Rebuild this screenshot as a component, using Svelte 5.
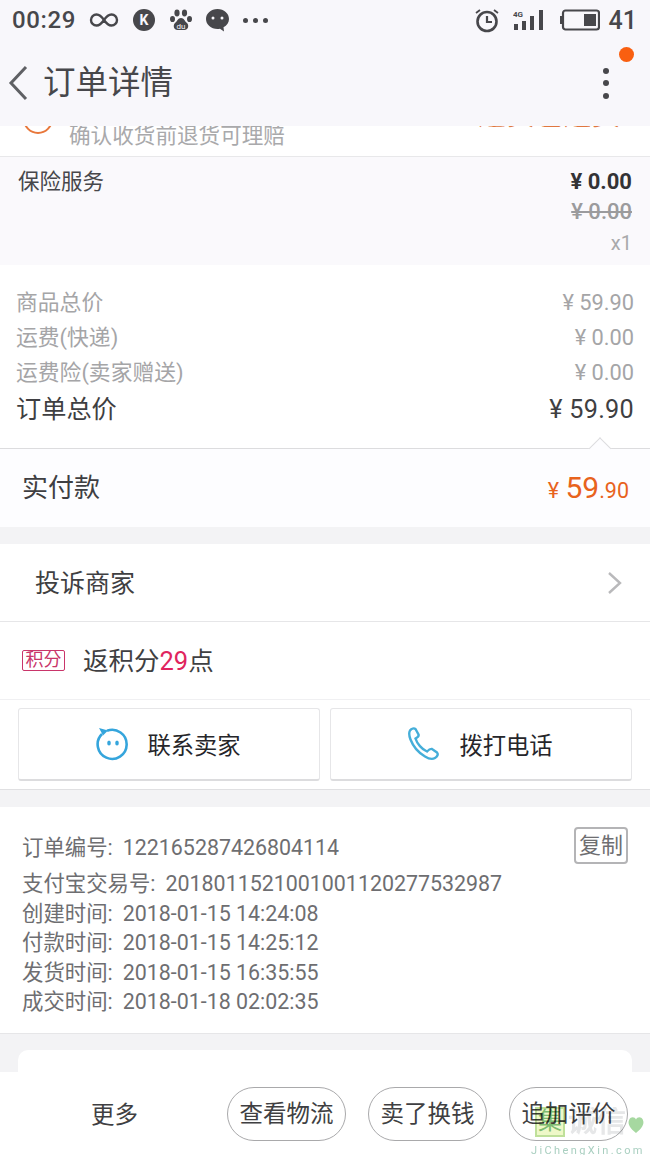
<script>
  const times = [
    ['创建时间:', '2018-01-15 14:24:08'],
    ['付款时间:', '2018-01-15 14:25:12'],
    ['发货时间:', '2018-01-15 16:35:55'],
    ['成交时间:', '2018-01-18 02:02:35']
  ];
  const fees = [
    ['商品总价', '¥ 59.90'],
    ['运费(快递)', '¥ 0.00'],
    ['运费险(卖家赠送)', '¥ 0.00']
  ];
</script>

<div class="page">
  <header class="top">
    <div class="status">
      <span class="clock">00:29</span>
      <svg class="ic" width="30" height="16" viewBox="0 0 30 16"><path d="M15 8C12 3.500 10 2.500 7.500 2.500a5.500 5.500 0 0 0 0 11C10 13.500 12 12.500 15 8c3-4.500 5-5.500 7.500-5.500a5.500 5.500 0 0 1 0 11C20 13.500 18 12.500 15 8z" fill="none" stroke="#47474b" stroke-width="2.400"/></svg>
      <span class="round">K</span>
      <svg class="ic" width="24" height="24" viewBox="0 0 24 24"><g fill="#47474b"><ellipse cx="8" cy="5" rx="2.600" ry="3.400"/><ellipse cx="15.500" cy="5" rx="2.600" ry="3.400"/><ellipse cx="3.500" cy="11" rx="2.500" ry="3.100"/><ellipse cx="20.500" cy="11" rx="2.500" ry="3.100"/><path d="M12 10c3 0 3.500 3 6 5 2.500 2.500 1 7-2.500 7h-7C5 22 3.500 17.500 6 15c2.500-2 3-5 6-5z"/></g><text x="12" y="20.500" font-size="8" text-anchor="middle" fill="#f8f7fb" font-family="Roboto">du</text></svg>
      <svg class="ic" width="25" height="24" viewBox="0 0 25 24"><path d="M12.500 1C6 1 1 5.500 1 11s5 10 11.500 10c1 0 1.500 0 2.500-.2l4 2.700-.5-4.300C22 17.500 24 14.500 24 11 24 5.500 19 1 12.500 1z" fill="#47474b"/><circle cx="8" cy="10" r="1.500" fill="#f8f7fb"/><circle cx="17" cy="10" r="1.500" fill="#f8f7fb"/></svg>
      <span class="more3"><i></i><i></i><i></i></span>
      <span class="spring"></span>
      <svg class="ic" width="26" height="25" viewBox="0 0 26 25"><circle cx="13" cy="13.500" r="9.500" fill="none" stroke="#47474b" stroke-width="2.600"/><path d="M13 8v6h5" fill="none" stroke="#47474b" stroke-width="2.200"/><path d="M2 5l4-3M24 5l-4-3" stroke="#47474b" stroke-width="1.800"/></svg>
      <svg class="signal" width="34" height="22" viewBox="0 0 34 22"><text x="0" y="7.500" font-size="8" font-weight="700" fill="#47474b" font-family="Roboto">4G</text><g fill="#47474b"><rect x="1" y="15" width="4" height="6"/><rect x="9" y="12" width="4" height="9"/><rect x="17" y="7" width="4" height="14"/><rect x="26" y="1" width="4" height="20"/></g></svg>
      <svg class="batt" width="41" height="22" viewBox="0 0 41 22"><path d="M1 7h2v8H1z" fill="#47474b"/><rect x="4" y="1.500" width="36" height="19" rx="2.500" fill="none" stroke="#47474b" stroke-width="2.200"/><rect x="25" y="5" width="12" height="12" fill="#47474b"/></svg>
      <span class="level">41</span>
    </div>
    <div class="nav">
      <svg class="back" width="22" height="36" viewBox="0 0 22 36"><path d="M19 2L4 18l15 16" fill="none" stroke="#5f6064" stroke-width="3"/></svg>
      <span class="title">订单详情</span>
      <span class="spring"></span>
      <span class="kebab"><i></i><i></i><i></i></span>
      <span class="dot"></span>
    </div>
  </header>

  <section class="clip">
    <span class="smile"></span>
    <span class="guarantee">确认收货前退货可理赔</span>
    <span class="cut">退货包运费</span>
  </section>

  <section class="insure">
    <span class="ins-name">保险服务</span>
    <div class="ins-prices">
      <b>¥ 0.00</b>
      <s>¥ 0.00</s>
      <span>x1</span>
    </div>
  </section>

  <section class="fees">
    {#each fees as f}
      <div class="fee"><span>{f[0]}</span><span>{f[1]}</span></div>
    {/each}
    <div class="total"><span>订单总价</span><span class="num">¥ 59.90</span></div>
    <span class="caret"></span>
  </section>

  <section class="paid">
    <span class="paid-label">实付款</span>
    <span class="amount"><small>¥</small> <em>59</em><small class="cents">.90</small></span>
  </section>

  <section class="row complain">
    <span class="lift">投诉商家</span>
    <svg width="16" height="24" viewBox="0 0 16 24"><path d="M2 2l11 10L2 22" fill="none" stroke="#b9b9bb" stroke-width="2.400"/></svg>
  </section>

  <section class="row points">
    <span class="tag">积分</span>
    <span class="ptxt lift">返积分<em>29</em>点</span>
  </section>

  <section class="contact">
    <button class="cbtn">
      <svg width="36" height="36" viewBox="0 0 36 36"><path d="M7 8a14.500 14.500 0 1 0 5-3.200" fill="none" stroke="#35a5dc" stroke-width="2.600"/><path d="M4 2l9 2.500-5 5z" fill="#35a5dc"/><ellipse cx="14" cy="17" rx="1.800" ry="2.600" fill="#35a5dc"/><ellipse cx="22" cy="17" rx="1.800" ry="2.600" fill="#35a5dc"/></svg>
      <span>联系卖家</span>
    </button>
    <button class="cbtn">
      <svg width="36" height="36" viewBox="0 0 36 36"><path d="M3 4.500c1.500-2 4-2.500 5.500-1.500l3 5.500c.5 1.500-1 3-3 4 1.500 5 6.500 11 11.500 13 1.500-1.500 3.500-3 5-2.500l5 3.500c1.500 1.500.5 4-2 5.500-2.500 1.500-6 1-10-1.500C12 27 6 20 3.500 13.500 2 9.500 1.800 6.500 3 4.500z" fill="none" stroke="#45aed9" stroke-width="2.400"/></svg>
      <span>拨打电话</span>
    </button>
  </section>

  <section class="order">
    <div class="order-no">
      <span><span class="lbl">订单编号:</span>122165287426804114</span>
      <span class="copy">复制</span>
    </div>
    <div class="oline"><span class="lbl">支付宝交易号:</span>2018011521001001120277532987</div>
    {#each times as t}
      <div class="oline"><span class="lbl">{t[0]}</span>{t[1]}</div>
    {/each}
  </section>

  <section class="stub"><div class="stub-card"></div></section>

  <footer class="bar">
    <span class="more">更多</span>
    <span class="pill">查看物流</span>
    <span class="pill">卖了换钱</span>
    <span class="pill">追加评价</span>
  </footer>

  <div class="mark" aria-hidden="true">
    <div class="mark-top">
      <span class="mark-box">集</span>
      <span class="mark-cn">诚信</span>
      <svg class="leaf" width="18" height="22" viewBox="0 0 16 18"><path d="M8 17C3 13 0 9 2 5c1.500-3 5-2.500 6 0 1-2.500 4.500-3 6 0 2 4-1 8-6 12z" fill="#a6d8a0"/></svg>
    </div>
    <div class="mark-en">JiChengXin.com</div>
  </div>
</div>

<style>
  :global(body) { margin: 0; background: #fff; }
  .page {
    position: relative;
    width: 650px;
    height: 1155px;
    overflow: hidden;
    background: #f3f3f5;
    font-family: Roboto, "Noto Sans CJK SC", sans-serif;
    color: #3f3f42;
  }
  .spring { flex: 1; }
  .lift { position: relative; top: -2px; }

  .top { height: 126px; background: #f8f7fb; }
  .status { height: 40px; display: flex; align-items: center; padding: 0 13px 0 12px; color: #47474b; }
  .clock { font-size: 24px; font-weight: 500; letter-spacing: .6px; margin-right: 13px; }
  .ic { flex: none; }
  .round {
    width: 22px; height: 22px; margin: 0 14px 0 14px; border-radius: 50%;
    background: #47474b; color: #f8f7fb; font-size: 14px; font-weight: 700;
    display: flex; align-items: center; justify-content: center;
  }
  .status > svg:nth-of-type(3) { margin-left: 12px; }
  .more3 { display: flex; gap: 5px; margin-left: 13px; }
  .more3 i { width: 5px; height: 5px; border-radius: 50%; background: #47474b; }
  .signal { margin-left: 13px; }
  .batt { margin-left: 12px; margin-right: 1px; }
  .level { font-size: 25px; font-weight: 500; margin-left: 8px; letter-spacing: 0; }

  .nav { position: relative; height: 86px; display: flex; align-items: center; padding: 0 41px 0 7px; box-sizing: border-box; }
  .back { margin-right: 14px; }
  .title { font-size: 32.500px; color: #47474b; line-height: 1; }
  .kebab { display: flex; flex-direction: column; gap: 6.500px; }
  .kebab i { width: 6px; height: 6px; border-radius: 50%; background: #47474b; }
  .dot { position: absolute; right: 16px; top: 7px; width: 15px; height: 15px; border-radius: 50%; background: #f95f10; }

  .clip { position: relative; height: 30px; background: #fff; border-bottom: 1px solid #e8e8ea; overflow: hidden; }
  .smile { position: absolute; left: 23px; top: -22px; width: 30px; height: 30px; border: 2px solid #e8773b; border-radius: 50%; box-sizing: border-box; }
  .guarantee { position: absolute; left: 69px; top: -1px; font-size: 21.600px; line-height: 22px; color: #a9a9ab; white-space: nowrap; }
  .cut { position: absolute; left: 478px; top: -24px; font-size: 28px; line-height: 28px; color: #e0773f; letter-spacing: .5px; white-space: nowrap; }

  .insure { height: 108px; background: #faf9fc; display: flex; justify-content: space-between; padding: 11px 18px 10px; box-sizing: border-box; }
  .ins-name { font-size: 21.500px; line-height: 28px; color: #47474b; }
  .ins-prices { display: flex; flex-direction: column; align-items: flex-end; font-size: 22px; line-height: 30px; margin-top: -1px; }
  .ins-prices b { color: #333336; font-weight: 700; }
  .ins-prices s { color: #9b9b9d; font-weight: 500; }
  .ins-prices span { color: #a9a9ab; font-size: 20px; line-height: 32px; }

  .fees { position: relative; height: 184px; background: #fff; padding: 20px 16px 0; box-sizing: border-box; border-bottom: 1px solid #dcdcde; }
  .fee { display: flex; justify-content: space-between; height: 35px; line-height: 35px; font-size: 21.800px; color: #a5a5a7; }
  .total { display: flex; justify-content: space-between; margin-top: 1px; height: 38px; line-height: 38px; font-size: 25.200px; color: #3f3f42; }
  .total .num { letter-spacing: .3px; }
  .caret {
    position: absolute; right: 42px; bottom: -1px; width: 15px; height: 15px;
    transform: translateY(7.500px) rotate(45deg);
    background: #fdfdff; border-left: 1px solid #dcdcde; border-top: 1px solid #dcdcde;
  }

  .paid { height: 78px; background: #fdfdff; display: flex; justify-content: space-between; align-items: center; padding: 0 21px 0 22px; font-size: 26px; color: #3f3f42; }
  .paid-label { position: relative; top: -3px; }
  .amount { color: #e8631d; line-height: 1; }
  .amount small { font-size: 21.500px; }
  .amount em { font-style: normal; font-size: 30px; font-weight: 400; }

  .row { background: #fff; display: flex; align-items: center; border-bottom: 1px solid #e6e6e8; box-sizing: border-box; }
  .complain { margin-top: 17px; height: 78px; justify-content: space-between; padding: 0 27px 0 35px; font-size: 25px; color: #3f3f42; }
  .points { height: 78px; padding: 0 22px; border-bottom-color: #f0f0f2; }
  .tag {
    width: 43px; height: 21px; border: 1px solid #c9356a; border-radius: 2px; box-sizing: border-box;
    color: #c9356a; font-size: 18px; line-height: 18px; text-align: center; margin-right: 18px; white-space: nowrap;
  }
  .ptxt { font-size: 25.500px; color: #3f3f42; }
  .ptxt em { font-style: normal; color: #e0245e; }

  .contact { height: 90px; background: #fff; display: flex; gap: 10px; padding: 8px 18px 0; box-sizing: border-box; border-bottom: 1px solid #e0e0e2; }
  .cbtn {
    flex: 1; height: 73px; padding: 0 2px 0 0; background: #fff; border: 1px solid #e6e6e8; border-bottom: 2px solid #dcdcde;
    border-radius: 3px; display: flex; align-items: center; justify-content: center;
    font: inherit; font-size: 23.300px; color: #26262a;
  }
  .cbtn:first-child { gap: 16px; }
  .cbtn:last-child { gap: 16px; }

  .order { margin-top: 17px; height: 227px; background: #fff; border-bottom: 1px solid #e6e6e8; box-sizing: border-box; padding: 23px 22px 0; font-size: 21.400px; color: #6e6e71; }
  .lbl { margin-right: 10px; }
  .order-no { display: flex; justify-content: space-between; align-items: center; height: 30px; margin-bottom: 9px; }
  .copy {
    width: 54px; height: 37px; border: 2px solid #b4b4b6; border-radius: 4px; box-sizing: border-box;
    text-align: center; line-height: 33px; font-size: 22px; color: #6e6e71; white-space: nowrap; margin-top: 0;
  }
  .oline { height: 29.500px; line-height: 29.500px; white-space: nowrap; }

  .stub { padding: 16px 18px 0; height: 22px; box-sizing: content-box; }
  .stub-card { height: 30px; background: #fff; border-radius: 10px 10px 0 0; }

  .bar {
    position: absolute; left: 0; right: 0; top: 1072px; height: 83px; background: #fff;
    display: flex; align-items: center; padding: 0 22px 0 91px; box-sizing: border-box; font-size: 23.500px; color: #3f3f42;
  }
  .more { width: 47px; margin-right: 89px; white-space: nowrap; flex: none; position: relative; top: -1px; }
  .pill {
    width: 119px; height: 54px; border: 1px solid #a9a9ab; border-radius: 27px; box-sizing: border-box;
    text-align: center; line-height: 53px; margin-right: 22px; white-space: nowrap; flex: none;
  }
  .pill:last-child { margin-right: 0; }

  .mark { position: absolute; left: 531px; top: 1106px; width: 119px; mix-blend-mode: multiply; }
  .mark-top { display: flex; align-items: center; height: 32px; padding-left: 4px; box-sizing: border-box; }
  .mark-box {
    width: 30px; height: 30px; border: 2px solid #bfe09a; box-sizing: border-box; background: #eef8c8;
    color: #7dbb70; font-size: 24px; line-height: 24px; text-align: center; flex: none;
  }
  .mark-cn { font-size: 29px; line-height: 30px; color: #e6e7e8; white-space: nowrap; margin-left: 3px; font-weight: 700; width: 62px; overflow: hidden; flex: none; }
  .leaf { flex: none; margin-left: -3px; margin-top: 3px; }
  .mark-en { font-size: 11px; line-height: 13px; color: #a9cfc0; letter-spacing: 2.400px; white-space: nowrap; margin-top: 6px; }
</style>
